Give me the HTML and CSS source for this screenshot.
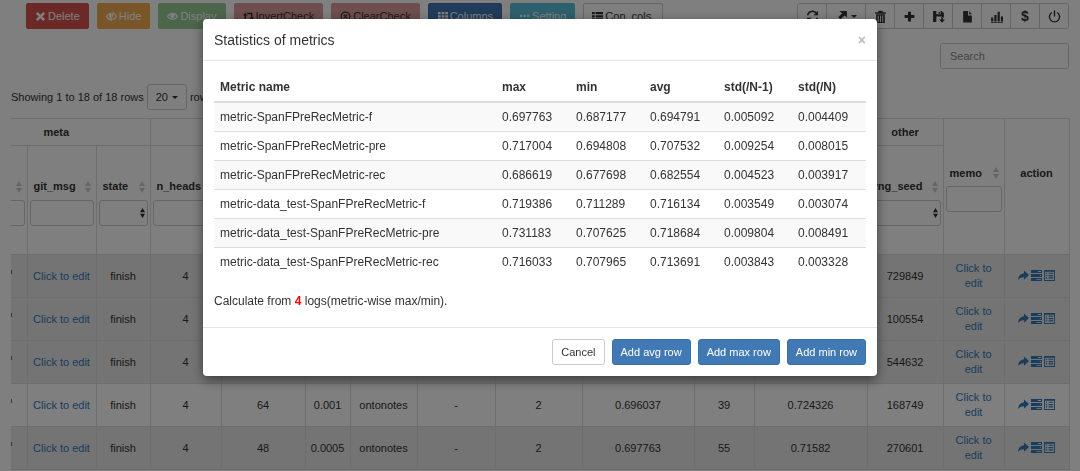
FILE: index.html
```
<!DOCTYPE html>
<html lang="en">
<head>
<meta charset="utf-8">
<title>Statistics of metrics</title>
<link rel="stylesheet" href="styles.css">
</head>
<body>
<svg class="defs" aria-hidden="true">
  <symbol id="share" viewBox="0 0 12 12"><path d="M6.500.5L12 5.500l-5.500 5V7.800C4 7.600 2 8.500 0 11c.3-4.500 2.500-7 6.500-7.500z"/></symbol>
  <symbol id="tasks" viewBox="0 0 12 12"><path fill-rule="evenodd" d="M0 0h12v3.300H0zM7.500 1.200v.9H11v-.9zM0 4.300h12v3.300H0zM9.500 5.500v.9H11v-.9zM0 8.600h12V12H0zM6 9.800v.9h5v-.9z"/></symbol>
  <symbol id="listalt" viewBox="0 0 12 12"><path fill-rule="evenodd" d="M0 0h12v12H0zM1 2v9h10V2zM2 3h1.500v1.200H2zM5 3h5v1.200H5zM2 5.500h1.500v1.200H2zM5 5.500h5v1.200H5zM2 8h1.500v1.200H2zM5 8h5v1.200H5z"/></symbol>
  <symbol id="sorts" viewBox="0 0 6 12"><path d="M3 0l3 5H0zM3 12l3-5H0z"/></symbol>
</svg>
<main class="page">
  <div class="toolbar">
    <div class="actions">
      <button class="btn danger"><svg class="ico" viewBox="0 0 12 12"><path d="M3 1l3 3 3-3 2 2-3 3 3 3-2 2-3-3-3 3-2-2 3-3-3-3z"/></svg>Delete</button>
      <button class="btn warning"><svg class="ico" viewBox="0 0 12 12"><path class="line" d="M6 2.500C3.500 2.500 1.500 4 .7 6c.8 2 2.800 3.500 4.300 3.500M8.500 3C10 3.700 11 5 11.300 6c-.6 1.700-2 3-4 3.400M8 1L5.500 11"/><path d="M6.500 3L5 8.500C3 8 2.500 5 4 3.500z"/></svg>Hide</button>
      <button class="btn success"><svg class="ico" viewBox="0 0 12 12"><path class="line" d="M.6 6C3 1.500 9 1.500 11.400 6 9 10 3 10 .6 6z"/><circle cx="6" cy="5.300" r="2.500"/></svg>Display</button>
      <button class="btn rose"><svg class="ico" viewBox="0 0 12 12"><path d="M2.500 2L5 5H3.400v4H8v1.500H1.700V5H0zM4 2h6.300v5H12L9.500 10.500 7 7h1.700V3.500H5z"/></svg>InvertCheck</button>
      <button class="btn rose"><svg class="ico" viewBox="0 0 12 12"><circle class="line" cx="6" cy="6" r="4.800"/><path class="line" d="M4 4l4 4M8 4L4 8"/></svg>ClearCheck</button>
      <button class="btn primary"><svg class="ico" viewBox="0 0 12 12"><path d="M1 1h3v2.500H1zM5 1h3v2.500H5zM9 1h3v2.500H9zM1 4.500h3V7H1zM5 4.500h3V7H5zM9 4.500h3V7H9zM1 8h3v2.500H1zM5 8h3v2.500H5zM9 8h3v2.500H9z"/></svg>Columns</button>
      <button class="btn info"><svg class="ico" viewBox="0 0 12 12"><path d="M1 4h2.500v2.500H1zM5 4h2.500v2.500H5zM9 4h2.500v2.500H9z"/></svg>Setting</button>
      <button class="btn plain"><svg class="ico" viewBox="0 0 12 12"><path d="M0 1h3v2.500H0zM4 1h8v2.500H4zM0 4.500h3V7H0zM4 4.500h8V7H4zM0 8h3v2.500H0zM4 8h8v2.500H4z"/></svg>Con. cols.</button>
    </div>
    <div class="tools">
      <button aria-label="Refresh"><svg class="ico" viewBox="0 0 12 12"><path class="line" d="M1.500 5A4.500 4.500 0 0 1 9.500 3M10.500 7A4.500 4.500 0 0 1 2.500 9"/><path d="M11 .8v4H7zM1 11.200v-4h4z"/></svg></button>
      <button class="wide" aria-label="Export"><svg class="ico" viewBox="0 0 12 12"><path d="M4 1h7v6L8.800 5 5 8.500 3 6.800 6.700 3zM1 9h10v2.500H1z"/></svg><i class="caret"></i></button>
      <button aria-label="Remove"><svg class="ico" viewBox="0 0 12 12"><path fill-rule="evenodd" d="M1 2h3V.7h4V2h3v1.500H1zM2 4h8v8H2zM3.500 5v6h.8V5zM5.600 5v6h.8V5zM7.700 5v6h.8V5z"/></svg></button>
      <button aria-label="Add"><svg class="ico" viewBox="0 0 12 12"><path d="M4.600 1.500h2.800v3.100h3.100v2.800H7.400v3.100H4.600V7.400H1.500V4.600h3.100z"/></svg></button>
      <button aria-label="Save"><svg class="ico" viewBox="0 0 12 12"><path fill-rule="evenodd" d="M1 1h8l2 2v4H9.500l-.5-1H4v5H1zM4 1v3h4V1zM6 1.500h1.300v2H6zM8.500 6.500H10v2.300h2L9.300 11.800 6.500 8.800h2z"/></svg></button>
      <button aria-label="File"><svg class="ico" viewBox="0 0 12 12"><path d="M2 1h4.500v4H10v6.500H2zM7.500 1L10 4H7.500z"/></svg></button>
      <button aria-label="Charts"><svg class="ico" viewBox="0 0 12 12"><path d="M1 7h2v3.500H1zM4 4.500h2v6H4zM7 1.500h2v9H7zM10 6h2v4.500h-2zM1 11h11v.8H1z"/></svg></button>
      <button class="dollar">$</button>
      <button aria-label="Power"><svg class="ico" viewBox="0 0 12 12"><path class="line" d="M3.500 2.300a4.700 4.700 0 1 0 5 0M6 .5V6"/></svg></button>
    </div>
  </div>
  <div class="searchbar"><input class="field" type="text" placeholder="Search" aria-label="Search"></div>
  <div class="paging">Showing 1 to 18 of 18 rows <button class="size">20<i class="caret"></i></button> rows</div>

  <table class="logs">
    <colgroup><col class="c0"><col class="c1"><col class="c2"><col class="c3"><col class="c4"><col class="c5"><col class="c6"><col class="c7"><col class="c8"><col class="c9"><col class="c10"><col class="c11"><col class="c12"><col class="c13"><col class="c14"></colgroup>
    <thead>
      <tr class="groups"><th colspan="3" class="meta">meta</th><th colspan="9"></th><th>other</th><th rowspan="2" class="head"><div class="name">memo<svg class="sort"><use href="#sorts"/></svg></div><input class="field" aria-label="memo"></th><th rowspan="2" class="action">action</th></tr>
      <tr class="names">
        <th class="head cut"><div class="name"><svg class="sort"><use href="#sorts"/></svg></div><input class="field" aria-label="filter"></th>
        <th class="head"><div class="name">git_msg<svg class="sort"><use href="#sorts"/></svg></div><input class="field" aria-label="git_msg"></th>
        <th class="head"><div class="name">state<svg class="sort"><use href="#sorts"/></svg></div><div class="pick"><select class="field" aria-label="state"><option></option></select><svg class="updown"><use href="#sorts"/></svg></div></th>
        <th class="head"><div class="name">n_heads</div><input class="field" aria-label="n_heads"></th>
        <th></th><th></th><th></th><th></th><th></th><th></th><th></th><th></th>
        <th class="head"><div class="name">rng_seed<svg class="sort"><use href="#sorts"/></svg></div><div class="pick"><select class="field" aria-label="rng_seed"><option></option></select><svg class="updown"><use href="#sorts"/></svg></div></th>
      </tr>
    </thead>
    <tbody>
      <tr class="shade"><td class="cutlink"></td><td><a href="#">Click to edit</a></td><td>finish</td><td>4</td><td></td><td></td><td></td><td></td><td></td><td></td><td></td><td></td><td>729849</td><td class="memo"><a href="#">Click to edit</a></td><td><div class="acts"><svg><use href="#share"/></svg><svg><use href="#tasks"/></svg><svg><use href="#listalt"/></svg></div></td></tr>
      <tr class="shade"><td class="cutlink"></td><td><a href="#">Click to edit</a></td><td>finish</td><td>4</td><td></td><td></td><td></td><td></td><td></td><td></td><td></td><td></td><td>100554</td><td class="memo"><a href="#">Click to edit</a></td><td><div class="acts"><svg><use href="#share"/></svg><svg><use href="#tasks"/></svg><svg><use href="#listalt"/></svg></div></td></tr>
      <tr class="shade"><td class="cutlink"></td><td><a href="#">Click to edit</a></td><td>finish</td><td>4</td><td></td><td></td><td></td><td></td><td></td><td></td><td></td><td></td><td>544632</td><td class="memo"><a href="#">Click to edit</a></td><td><div class="acts"><svg><use href="#share"/></svg><svg><use href="#tasks"/></svg><svg><use href="#listalt"/></svg></div></td></tr>
      <tr><td class="cutlink"></td><td><a href="#">Click to edit</a></td><td>finish</td><td>4</td><td>64</td><td>0.001</td><td>ontonotes</td><td>-</td><td>2</td><td>0.696037</td><td>39</td><td>0.724326</td><td>168749</td><td class="memo"><a href="#">Click to edit</a></td><td><div class="acts"><svg><use href="#share"/></svg><svg><use href="#tasks"/></svg><svg><use href="#listalt"/></svg></div></td></tr>
      <tr class="shade"><td class="cutlink"></td><td><a href="#">Click to edit</a></td><td>finish</td><td>4</td><td>48</td><td>0.0005</td><td>ontonotes</td><td>-</td><td>2</td><td>0.697763</td><td>55</td><td>0.71582</td><td>270601</td><td class="memo"><a href="#">Click to edit</a></td><td><div class="acts"><svg><use href="#share"/></svg><svg><use href="#tasks"/></svg><svg><use href="#listalt"/></svg></div></td></tr>
    </tbody>
  </table>
</main>

<div class="backdrop">
  <section class="modal" role="dialog" aria-labelledby="title">
    <header class="modal-head"><h1 id="title">Statistics of metrics</h1><button class="close" aria-label="Close">×</button></header>
    <div class="modal-body">
      <table class="stats">
        <thead><tr><th>Metric name</th><th class="num">max</th><th class="num">min</th><th class="num">avg</th><th class="num">std(/N-1)</th><th class="num">std(/N)</th></tr></thead>
        <tbody>
          <tr><td>metric-SpanFPreRecMetric-f</td><td>0.697763</td><td>0.687177</td><td>0.694791</td><td>0.005092</td><td>0.004409</td></tr>
          <tr><td>metric-SpanFPreRecMetric-pre</td><td>0.717004</td><td>0.694808</td><td>0.707532</td><td>0.009254</td><td>0.008015</td></tr>
          <tr><td>metric-SpanFPreRecMetric-rec</td><td>0.686619</td><td>0.677698</td><td>0.682554</td><td>0.004523</td><td>0.003917</td></tr>
          <tr><td>metric-data_test-SpanFPreRecMetric-f</td><td>0.719386</td><td>0.711289</td><td>0.716134</td><td>0.003549</td><td>0.003074</td></tr>
          <tr><td>metric-data_test-SpanFPreRecMetric-pre</td><td>0.731183</td><td>0.707625</td><td>0.718684</td><td>0.009804</td><td>0.008491</td></tr>
          <tr><td>metric-data_test-SpanFPreRecMetric-rec</td><td>0.716033</td><td>0.707965</td><td>0.713691</td><td>0.003843</td><td>0.003328</td></tr>
        </tbody>
      </table>
      <p class="note">Calculate from <b>4</b> logs(metric-wise max/min).</p>
    </div>
    <footer class="modal-foot"><button class="btn plain">Cancel</button><button class="btn primary">Add avg row</button><button class="btn primary">Add max row</button><button class="btn primary">Add min row</button></footer>
  </section>
</div>
</body>
</html>
```
FILE: styles.css
```
* { box-sizing: border-box; }
body {
  margin: 0;
  background: #fff;
  color: #333;
  font: 11px/15px "Liberation Sans", Arial, sans-serif;
}
button, input, select { font: inherit; color: inherit; margin: 0; }
.defs { position: absolute; width: 0; height: 0; }
.page { padding: 3px 11px 0; }
a { color: #337ab7; text-decoration: none; }

.toolbar { display: flex; justify-content: space-between; padding-left: 15px; }
.actions { display: flex; gap: 8px; }
.btn {
  display: flex;
  align-items: center;
  justify-content: center;
  height: 26px;
  padding: 0 8px;
  border: 1px solid transparent;
  border-radius: 3px;
  white-space: nowrap;
}
.actions .btn { border-radius: 2px; }
.ico { width: 13px; height: 13px; fill: currentColor; }
.actions .ico { width: 11px; height: 11px; margin-right: 2px; }
.line { fill: none; stroke: currentColor; stroke-width: 1.3; }
.danger { background: #d9534f; border-color: #d9534f; color: #fff; }
.warning { background: #f0ad4e; border-color: #f0ad4e; color: #fff; }
.success { background: #98cc98; border-color: #98cc98; color: #fff; }
.rose { background: #dc9c9e; border-color: #dc9c9e; }
.primary { background: #4179b4; border-color: #3a6fa8; color: #fff; }
.info { background: #5bc0de; border-color: #5bc0de; color: #fff; }
.plain { background: #fff; border-color: #ccc; }
.tools { display: flex; }
.tools button {
  display: flex;
  align-items: center;
  justify-content: center;
  width: 30px;
  height: 26px;
  padding: 0;
  margin-left: -1px;
  background: #fff;
  border: 1px solid #ccc;
}
.tools button:first-child { border-radius: 3px 0 0 3px; }
.tools button:last-child { border-radius: 0 3px 3px 0; }
.tools .wide { width: 40px; gap: 3px; }
.tools .dollar { font-size: 14px; font-weight: bold; }
.caret { border: 3px solid transparent; border-top-color: currentColor; border-bottom: 0; }

.field {
  display: block;
  width: 100%;
  height: 26px;
  padding: 0 9px;
  background: #fff;
  border: 1px solid #ccc;
  border-radius: 3px;
  appearance: none;
}
.searchbar { display: flex; justify-content: flex-end; margin-top: 14px; }
.searchbar .field { width: 129px; }
.field::placeholder { color: #888; }
.paging { display: flex; align-items: center; gap: 3px; margin-top: 15px; white-space: nowrap; }
.size {
  display: flex;
  align-items: center;
  gap: 4px;
  height: 26px;
  padding: 0 8px;
  background: #fff;
  border: 1px solid #ccc;
  border-radius: 3px;
}

.logs { width: 100%; margin-top: 8px; table-layout: fixed; border-collapse: collapse; }
.logs th, .logs td { border: 1px solid #ddd; padding: 0; text-align: center; overflow: hidden; }
.logs tr > :first-child { border-left: 0; }
.logs td { height: 43px; }
.logs td a { white-space: nowrap; }
.logs .memo a { display: block; padding: 0 6px; white-space: normal; }
.logs .meta { padding-right: 48px; }
.logs .action { padding-bottom: 26px; }
.cutlink::before { content: ""; display: block; width: 1px; height: 4px; margin-bottom: 8px; background: #337ab7; }
.groups { height: 27px; }
.names { height: 109px; }
.logs .head { padding: 0 2px; }
.name { display: flex; align-items: center; justify-content: space-between; height: 24px; padding: 0 3px 0 4px; margin-bottom: 1px; }
.cut .name { justify-content: flex-end; }
.logs .cut { padding-left: 0; }
.cut .field { border-left: 0; border-radius: 0 3px 3px 0; padding: 0; }
.sort { width: 6px; height: 12px; fill: #ccc; }
.pick { display: grid; align-items: center; }
.pick > * { grid-area: 1 / 1; }
.updown { width: 5px; height: 10px; justify-self: end; margin-right: 3px; fill: #333; }
.shade { background: #e9e9e9; }
.acts { display: flex; justify-content: center; gap: 2px; }
.acts svg { width: 11px; height: 11px; margin-bottom: 2px; fill: #337ab7; }
.c0 { width: 16px; } .c1 { width: 69px; } .c2 { width: 54px; } .c3 { width: 71px; }
.c4 { width: 84px; } .c5 { width: 45px; } .c6 { width: 67px; } .c7 { width: 78px; }
.c8 { width: 87px; } .c9 { width: 112px; } .c10 { width: 60px; } .c11 { width: 113px; }
.c12 { width: 76px; } .c13 { width: 61px; } .c14 { width: 65px; }

.backdrop { position: fixed; inset: 0; padding: 19px 16px; background: rgba(0, 0, 0, .5); }
.modal {
  max-width: 674px;
  margin: 0 auto;
  background: #fff;
  border-radius: 4px;
  box-shadow: 0 4px 12px rgba(0, 0, 0, .5);
  font-size: 12px;
  line-height: 16px;
}
.modal-head {
  display: flex;
  align-items: center;
  justify-content: space-between;
  height: 42px;
  padding: 0 11px;
  border-bottom: 1px solid #e5e5e5;
}
.modal-head h1 { margin: 0; font-size: 14px; font-weight: normal; }
.close { padding: 0; border: 0; background: none; color: #bbb; font-size: 14px; font-weight: bold; }
.modal-body { padding: 11px; }
.stats { width: 100%; table-layout: fixed; border-collapse: collapse; }
.stats th, .stats td { padding: 6px; text-align: left; border-top: 1px solid #ddd; }
.stats thead th { padding-top: 7px; border-top: 0; border-bottom: 2px solid #ddd; }
.stats .num { width: 74px; }
.stats tbody tr:nth-child(odd) { background: #f9f9f9; }
.note { margin: 17px 0 7px; }
.note b { color: #f00; }
.modal-foot { display: flex; justify-content: flex-end; gap: 7px; padding: 11px; border-top: 1px solid #e5e5e5; }
.modal-foot .btn { font-size: 11px; }
```
